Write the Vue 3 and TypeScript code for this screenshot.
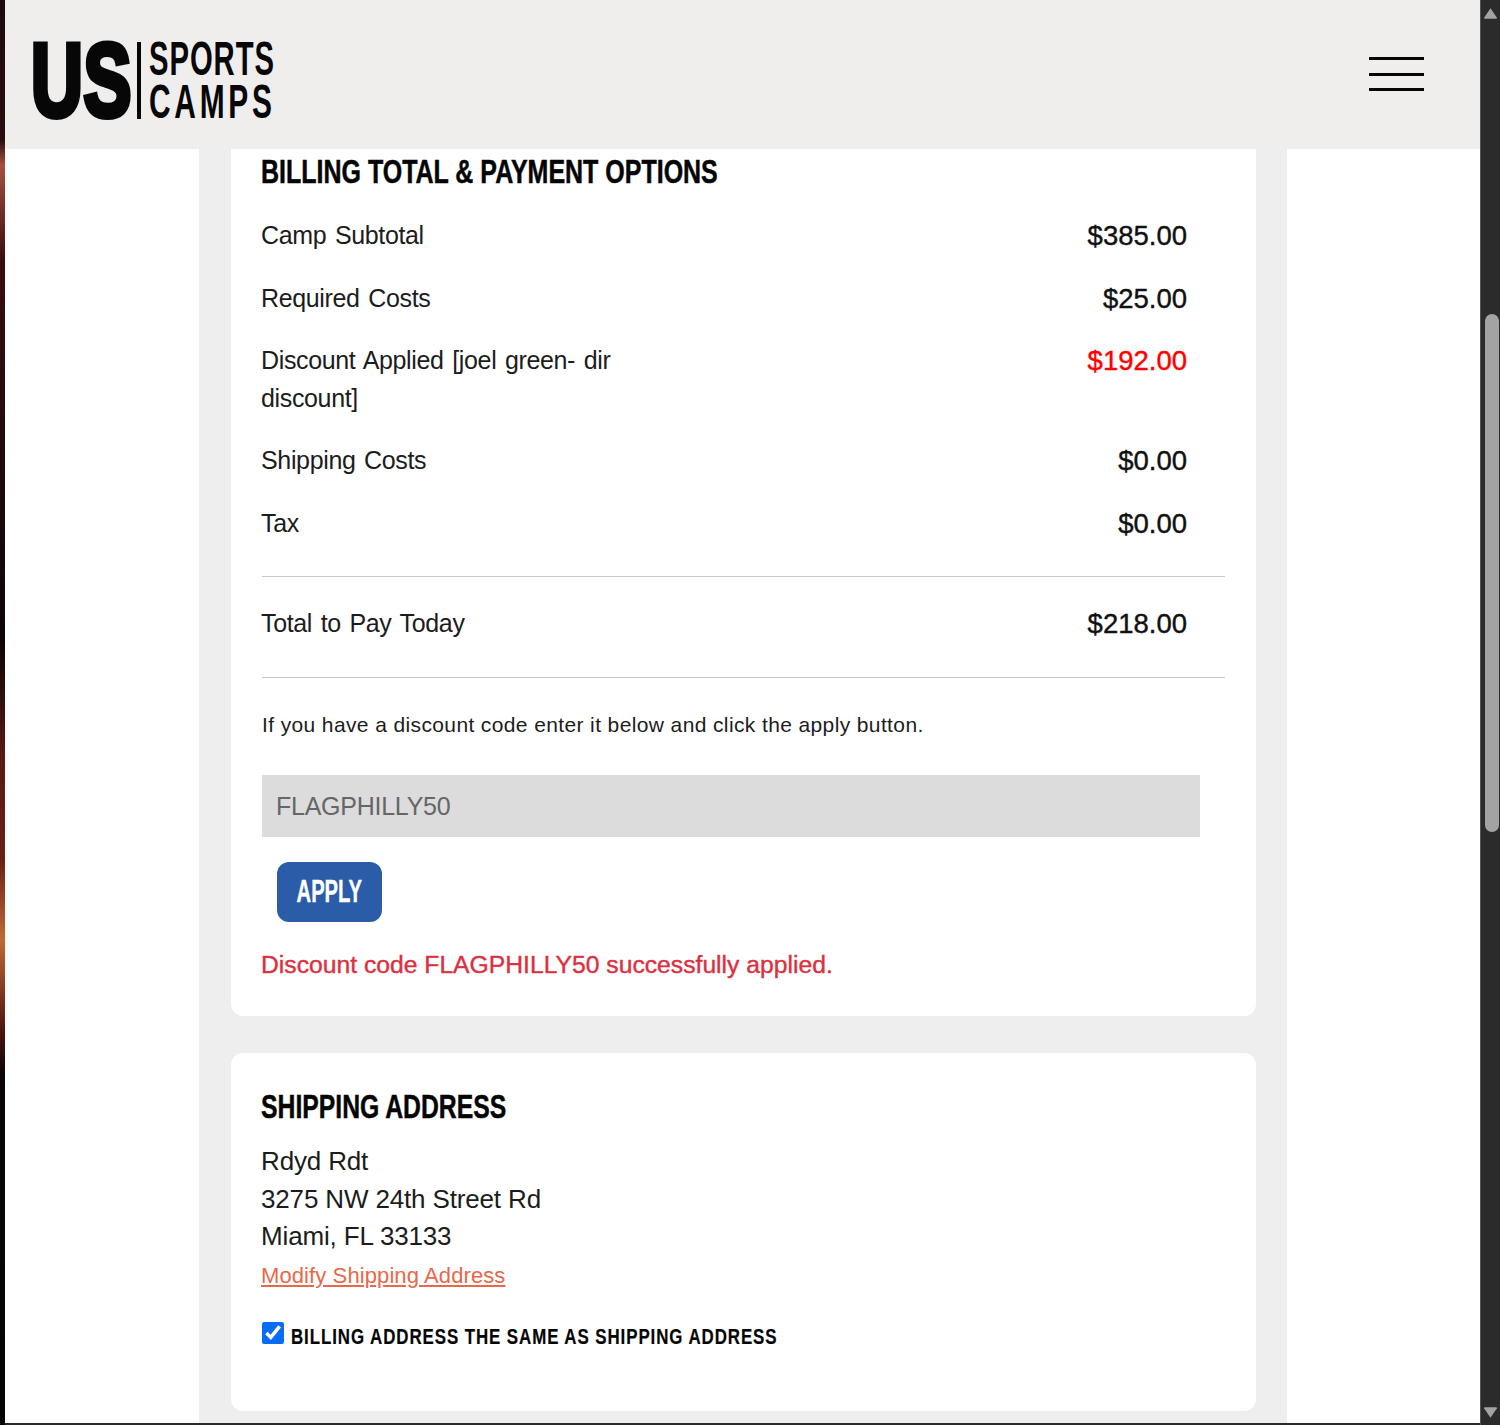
<script setup lang="ts">
interface Row { label: string; amount: string; red?: boolean }
const rows: Row[] = [
  { label: 'Camp Subtotal', amount: '$385.00' },
  { label: 'Required Costs', amount: '$25.00' },
  { label: 'Discount Applied [joel green- dir discount]', amount: '$192.00', red: true },
  { label: 'Shipping Costs', amount: '$0.00' },
  { label: 'Tax', amount: '$0.00' },
]
const code = 'FLAGPHILLY50'
</script>

<template>
  <div class="window">
    <div class="strip"></div>
    <div class="page">
      <header class="topbar">
        <div class="logo">
          <span class="logo-us">US</span>
          <span class="logo-rule"></span>
          <span class="logo-words"><span class="logo-sports">SPORTS</span><span class="logo-camps">CAMPS</span></span>
        </div>
        <button class="burger" aria-label="Menu"><i></i><i></i><i></i></button>
      </header>
      <main class="column">
        <section class="card first">
          <h2 class="heading">BILLING TOTAL &amp; PAYMENT OPTIONS</h2>
          <div v-for="r in rows" :key="r.label" class="row">
            <div class="label">{{ r.label }}</div>
            <div class="amount" :class="{ red: r.red }">{{ r.amount }}</div>
          </div>
          <hr class="rule" />
          <div class="row total">
            <div class="label">Total to Pay Today</div>
            <div class="amount">$218.00</div>
          </div>
          <hr class="rule" />
          <p class="hint">If you have a discount code enter it below and click the apply button.</p>
          <input class="code" :value="code" readonly />
          <button class="apply"><span>APPLY</span></button>
          <p class="success">Discount code FLAGPHILLY50 successfully applied.</p>
        </section>
        <section class="card second">
          <h2 class="heading">SHIPPING ADDRESS</h2>
          <div class="address">Rdyd Rdt<br />3275 NW 24th Street Rd<br />Miami, FL 33133</div>
          <a class="modify" href="#">Modify Shipping Address</a>
          <label class="same">
            <input type="checkbox" checked />
            <span>BILLING ADDRESS THE SAME AS SHIPPING ADDRESS</span>
          </label>
        </section>
      </main>
    </div>
    <div class="scrollbar">
      <svg class="arrow" viewBox="0 0 14 12"><path d="M7 1 13 10Q13.500 11 12 11H2Q.5 11 1 10Z" /></svg>
      <div class="track"><div class="thumb"></div></div>
      <svg class="arrow" viewBox="0 0 14 12"><path d="M7 11 13 2Q13.500 1 12 1H2Q.5 1 1 2Z" /></svg>
    </div>
  </div>
</template>

<style>
html, body { margin: 0; background: #2b2b2b; }
</style>

<style scoped>
.window {
  display: flex;
  width: 1500px;
  height: 1425px;
  overflow: hidden;
  font-family: "Liberation Sans", Arial, sans-serif;
  color: #1c1c1c;
}
.strip {
  flex: 0 0 5px;
  background: linear-gradient(180deg, #1d0a0c 0, #2a0d10 140px, #a5503f 165px, #3a0d10 260px, #14080a 560px, #0c0505 640px, #5a1a14 760px, #6a2016 860px, #c06a36 940px, #50140f 1030px, #0a0606 1075px, #050505 100%);
}
.page {
  flex: 0 0 1475px;
  height: 1423px;
  background: #fff;
  overflow: hidden;
}
.topbar {
  height: 149px;
  background: #efeeed;
  display: flex;
  align-items: center;
  justify-content: space-between;
  padding: 0 56px 0 28px;
  box-sizing: border-box;
}
.logo { display: flex; align-items: center; height: 80px; color: #070707; margin-top: 11px; }
.logo-us {
  font: 900 104px/80px "Liberation Sans", sans-serif;
  -webkit-text-stroke: 6px #070707;
  display: block;
  width: 97px;
  margin-left: -2px;
  transform: scaleX(.69);
  transform-origin: left center;
  letter-spacing: 1px;
}
.logo-rule { width: 3.500px; height: 77px; background: #070707; margin: 0 8px 0 9px; }
.logo-words { display: flex; flex-direction: column; width: 125px; }
.logo-sports, .logo-camps {
  font: 700 44px/43px "Liberation Sans", sans-serif;
  display: block;
  width: fit-content;
  white-space: nowrap;
  transform-origin: left center;
}
.logo-sports { letter-spacing: 1.400px; transform: scale(.665, 1.09); }
.logo-camps { letter-spacing: 5.500px; transform: scale(.68, 1.09); }
.burger {
  display: flex;
  flex-direction: column;
  gap: 12.600px;
  width: 55px;
  padding: 0;
  margin-top: -1px;
  border: 0;
  background: none;
}
.burger i { display: block; height: 3px; width: 55px; background: #050505; }
.column {
  width: 1088px;
  margin-left: 194px;
  padding: 0 31px 12px 32px;
  box-sizing: border-box;
  background: #eee;
  height: 1274px;
}
.card {
  background: #fff;
  border-radius: 0 0 12px 12px;
  padding: 0 31px 0 30px;
  box-sizing: border-box;
}
.first { height: 867px; }
.second { height: 358px; margin-top: 37px; border-radius: 12px; padding-top: 31px; }
.heading {
  margin: 0;
  width: fit-content;
  white-space: nowrap;
  font: 700 34px/44px "Liberation Sans", sans-serif;
  -webkit-text-stroke: .5px #050505;
  color: #050505;
  transform: scaleX(.735);
  transform-origin: left center;
}
.first .heading { margin-bottom: 24px; }
.second .heading { margin-bottom: 15px; transform: scaleX(.728); }
.row {
  display: flex;
  justify-content: space-between;
  align-items: flex-start;
  width: 926px;
  margin-bottom: 25px;
  font-size: 25px;
  line-height: 37.500px;
}
.label { width: 400px; letter-spacing: -.35px; word-spacing: 2px; }
.amount { font: 27.500px/37.500px "Liberation Sans", sans-serif; -webkit-text-stroke: .4px currentColor; color: #111; }
.amount.red { color: #f00; }
.rule { margin: 0 0 0 1px; border: 0; border-top: 1px solid #c9c9c9; width: 963px; }
.row + .rule { margin-top: 34px; }
.total { margin: 28px 0 34px; }
.hint { margin: 31px 0 0 1px; font-size: 21px; line-height: 32px; letter-spacing: .38px; }
.code {
  display: block;
  width: 938px;
  height: 62px;
  margin: 34px 0 25px 1px;
  padding: 1px 14px 0;
  box-sizing: border-box;
  border: 0;
  outline: 0;
  background: #dcdcdc;
  color: #666;
  font: 25px "Liberation Sans", sans-serif;
  letter-spacing: -.25px;
}
.apply {
  display: flex;
  align-items: center;
  justify-content: center;
  width: 105px;
  height: 60px;
  margin-left: 16px;
  padding: 1px 0 0;
  border: 0;
  border-radius: 12px;
  background: #2b5ca8;
  color: #fff;
  font: 700 31px "Liberation Sans", sans-serif;
}
.apply span { display: block; transform: scaleX(.65); -webkit-text-stroke: .4px #fff; }
.success {
  margin: 24px 0 0;
  color: #dc3040;
  font: 24.700px/37.500px "Liberation Sans", sans-serif;
  -webkit-text-stroke: .4px currentColor;
}
.address { font-size: 26px; line-height: 37.500px; letter-spacing: -.15px; }
.modify {
  display: block;
  margin-top: 3px;
  font-size: 22px;
  line-height: 33px;
  letter-spacing: .1px;
  color: #e8684a;
}
.same { display: flex; align-items: center; margin: 30px 0 0 1px; height: 30px; }
.same input {
  flex: none;
  width: 22px;
  height: 22px;
  margin: -7px 7px 0 0;
  accent-color: #0a6cf5;
}
.same span {
  display: block;
  white-space: nowrap;
  font: 700 22px/30px "Liberation Sans", sans-serif;
  letter-spacing: 1.200px;
  color: #050505;
  transform: scaleX(.768);
  transform-origin: left center;
  -webkit-text-stroke: .2px #050505;
}
.scrollbar {
  flex: 0 0 20px;
  box-sizing: border-box;
  height: 1425px;
  background: #2b2b2b;
  border-left: 1px solid #555;
  display: flex;
  flex-direction: column;
  align-items: center;
  padding: 7px 0 6px;
}
.arrow { width: 15px; height: 13px; fill: #a3a3a3; flex: none; }
.track { flex: 1; width: 100%; position: relative; }
.thumb {
  position: absolute;
  top: 294px;
  left: 4px;
  width: 14px;
  height: 518px;
  border-radius: 7px;
  background: #a3a3a3;
}
</style>
